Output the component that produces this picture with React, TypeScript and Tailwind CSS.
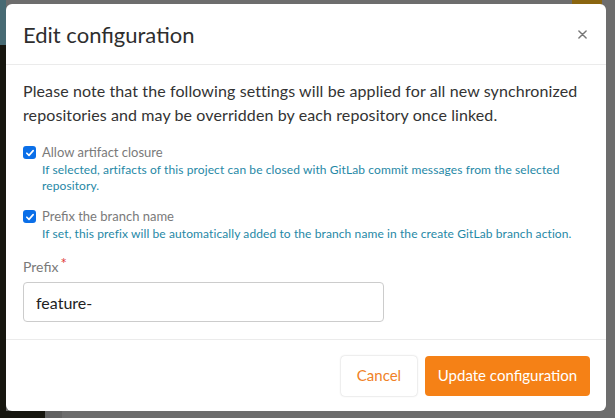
import React, { useState } from 'react';

const font = { fontFamily: 'Lato, "Noto Sans", sans-serif' };

const CheckBox: React.FC<{ checked: boolean; onToggle: () => void }> = ({ checked, onToggle }) => (
  <button
    onClick={onToggle}
    className={`mt-[3px] flex h-[13px] w-[13px] shrink-0 items-center justify-center rounded-[3px] ${
      checked ? 'bg-[#0b6fe8]' : 'border border-[#888] bg-white'
    }`}
  >
    {checked && (
      <svg viewBox="0 0 12 12" className="h-[10px] w-[10px]">
        <path d="M2.2 6.3 4.8 8.8 9.8 3.2" fill="none" stroke="#fff" strokeWidth="2" strokeLinecap="round" strokeLinejoin="round" />
      </svg>
    )}
  </button>
);

const Option: React.FC<{ label: string; help: string; checked: boolean; onToggle: () => void }> = ({
  label,
  help,
  checked,
  onToggle,
}) => (
  <div className="flex gap-[6px]">
    <CheckBox checked={checked} onToggle={onToggle} />
    <div>
      <div className="text-[13px] leading-[19px] text-[#7a7a7a]">{label}</div>
      <div className="text-[12px] leading-[16px] tracking-[0.1px] text-[#1f88a6]">{help}</div>
    </div>
  </div>
);

export default function App() {
  const [closure, setClosure] = useState(true);
  const [prefixBranch, setPrefixBranch] = useState(true);
  const [prefix, setPrefix] = useState('feature-');

  return (
    <div className="relative h-[418px] w-[615px] overflow-hidden bg-[#6d6d6d]" style={font}>
      {/* dimmed page behind the modal */}
      <div className="absolute left-0 top-[45px] h-[373px] w-[6px] bg-[#17160f]" />
      <div className="absolute bottom-0 left-0 h-[7px] w-[45px] bg-[#17160f]" />
      <div className="absolute bottom-0 left-[45px] h-[7px] w-[17px] bg-[#626262]" />
      <div className="absolute left-0 top-0 h-[45px] w-[6px] bg-[#476a73]" />
      <div className="absolute left-[572px] top-0 h-[10px] w-[30px] rounded-b-[6px] bg-[#8a6510]" />

      {/* modal */}
      <div className="absolute left-[6px] top-[4px] flex h-[407px] w-[600px] flex-col rounded-[6px] bg-white">
        <div className="flex h-[61px] shrink-0 items-center justify-between border-b border-[#ebebeb] pl-[17px] pr-[19px]">
          <h2 className="text-[22px] font-normal text-[#2e2e2e]">Edit configuration</h2>
          <button className="text-[#777]">
            <svg viewBox="0 0 10 10" className="h-[9px] w-[9px]">
              <path d="M1 1 9 9M9 1 1 9" stroke="#777" strokeWidth="1.6" strokeLinecap="round" />
            </svg>
          </button>
        </div>

        <div className="flex flex-1 flex-col px-[17px] pt-[14px]">
          <p className="text-[16px] leading-[24px] tracking-[0.1px] text-[#333]">
            Please note that the following settings will be applied for all new synchronized repositories and may be
            overridden by each repository once linked.
          </p>

          <div className="mt-[16px] flex flex-col gap-[13px]">
            <Option
              label="Allow artifact closure"
              help="If selected, artifacts of this project can be closed with GitLab commit messages from the selected repository."
              checked={closure}
              onToggle={() => setClosure(!closure)}
            />
            <Option
              label="Prefix the branch name"
              help="If set, this prefix will be automatically added to the branch name in the create GitLab branch action."
              checked={prefixBranch}
              onToggle={() => setPrefixBranch(!prefixBranch)}
            />
          </div>

          <label className="mt-[15px] flex text-[14px] leading-[20px] text-[#7a7a7a]">
            Prefix<span className="ml-[2px] -mt-[4px] text-[15px] text-[#e03a3a]">*</span>
          </label>
          <input
            value={prefix}
            onChange={(e) => setPrefix(e.target.value)}
            className="mt-[5px] h-[40px] w-[361px] rounded-[4px] border border-[#cccccc] px-[12px] text-[16px] text-[#222] outline-none"
          />
        </div>

        <div className="flex h-[72px] shrink-0 items-center justify-end gap-[8px] border-t border-[#ebebeb] pr-[16px]">
          <button className="h-[40px] w-[76px] rounded-[4px] bg-white text-[15px] text-[#f08227] shadow-[0_0_2px_rgba(0,0,0,0.25)]">
            Cancel
          </button>
          <button className="h-[40px] w-[165px] rounded-[4px] bg-[#f58116] text-[15px] text-white">
            Update configuration
          </button>
        </div>
      </div>
    </div>
  );
}
